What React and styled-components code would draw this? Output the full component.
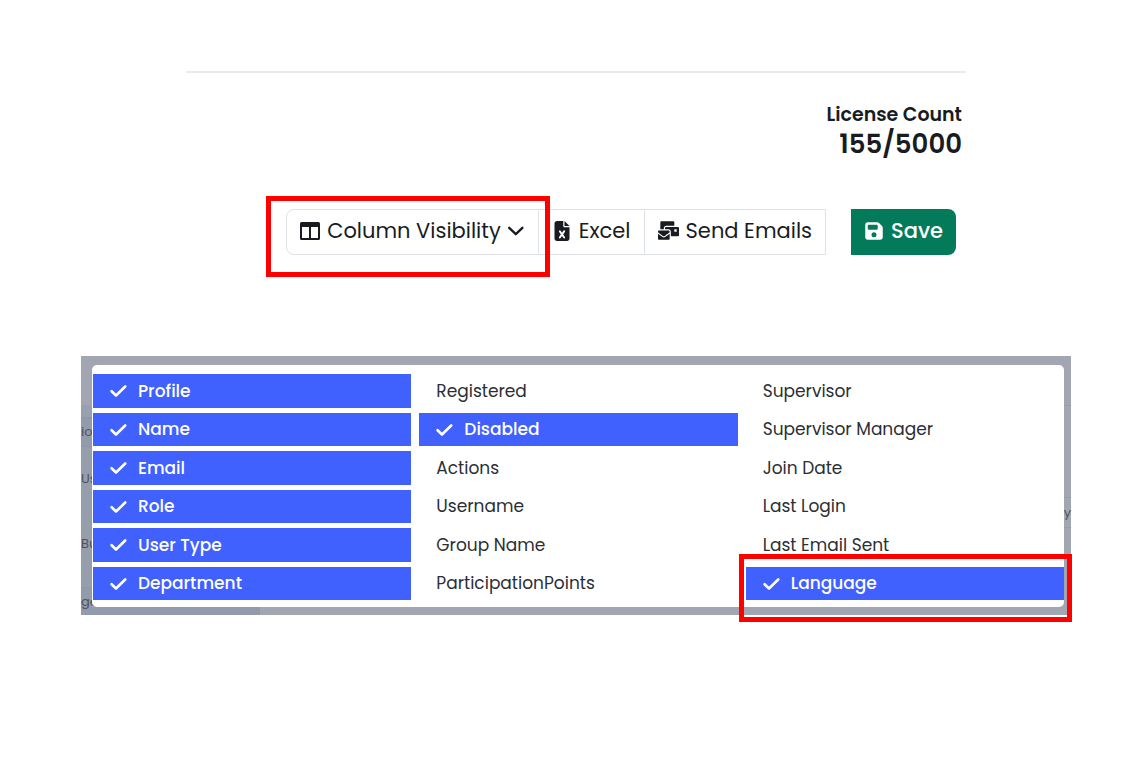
import React, { useState } from 'react';
import styled, { createGlobalStyle, css } from 'styled-components';
import { FaMailBulk } from 'react-icons/fa';
import { FaFileExcel, FaFloppyDisk } from 'react-icons/fa6';

const GlobalStyle = createGlobalStyle`
	* {
		box-sizing: border-box;
	}
	body {
		margin: 0;
		background: #ffffff;
		color: #181c21;
		font-family: Poppins, Inter, 'Liberation Sans', sans-serif;
	}
	button {
		font-family: inherit;
		cursor: pointer;
	}
`;

const Page = styled.main`
	padding: 71px 60px 40px 81px;
`;

const Summary = styled.header`
	margin: 0 105px;
	padding: 30px 4px 0;
	border-top: 2px solid #e9ecef;
	text-align: right;
`;

const CountLabel = styled.div`
	font-size: 19px;
	font-weight: 600;
	line-height: 24px;
`;

const CountValue = styled.div`
	font-size: 26px;
	font-weight: 600;
	line-height: 34px;
`;

const Toolbar = styled.div`
	display: flex;
	justify-content: flex-end;
	gap: 25px;
	margin: 48px 115px 0 0;
`;

const Group = styled.div`
	display: flex;
	border: 1px solid #dee2e6;
	border-radius: 8px 0 0 8px;
`;

const ToolButton = styled.button`
	display: flex;
	align-items: center;
	gap: 7px;
	height: 44px;
	padding: 0 13px 3px;
	border: 0;
	background: transparent;
	color: #181c21;
	font-size: 21px;
	white-space: nowrap;
	svg {
		flex: none;
		width: auto;
	}
`;

const GroupButton = styled(ToolButton)`
	border-left: 1px solid #dee2e6;
`;

const SaveButton = styled(ToolButton)`
	height: 46px;
	border-radius: 0 8px 8px 0;
	background: #037b5b;
	color: #ffffff;
	font-weight: 500;
`;

const Marked = styled.div`
	position: relative;
	display: flex;
	&:after {
		content: '';
		position: absolute;
		inset: ${(p) => p.$inset};
		border: 5px solid #ff0000;
		pointer-events: none;
		z-index: 1;
	}
`;

const Backdrop = styled.section`
	display: grid;
	grid-template-columns: 11px 1fr 7px;
	margin-top: 101px;
	background: #a1a6b2;
`;

const Edge = styled.div`
	display: flex;
	flex-direction: column;
	min-width: 0;
`;

const EdgeCell = styled.div`
	display: flex;
	align-items: center;
	justify-content: ${(p) => p.$align || 'flex-start'};
	height: ${(p) => p.$height}px;
	border-top: 1px solid ${(p) => p.$line || 'transparent'};
	background: ${(p) => p.$fill || 'transparent'};
	color: #4b5361;
	font-size: 13px;
	white-space: nowrap;
`;

const Middle = styled.div`
	position: relative;
	min-width: 0;
	padding-top: 9px;
`;

const Menu = styled.div`
	display: grid;
	grid-template-columns: repeat(3, 1fr);
	grid-template-rows: repeat(6, 1fr);
	grid-auto-flow: column;
	gap: 5px 8px;
	min-height: 242px;
	padding: 9px 0 7px 1px;
	border-radius: 5px;
	background: #ffffff;
`;

const Footer = styled.div`
	width: 168px;
	height: 8px;
	background: #929bab;
`;

const Option = styled.label`
	display: flex;
	align-items: center;
	flex: 1;
	gap: 11px;
	padding: 0 17px;
	color: #2b2f34;
	font-size: 17px;
	white-space: nowrap;
	cursor: pointer;
	${(p) =>
		p.$checked &&
		css`
			background: #4161ff;
			color: #ffffff;
			font-weight: 500;
		`}
	input {
		position: absolute;
		opacity: 0;
		pointer-events: none;
	}
`;

const Check = () => (
	<svg width='17' height='13' viewBox='0 0 17 13' fill='none' stroke='currentColor' strokeWidth='2.6' strokeLinecap='round' strokeLinejoin='round'>
		<path d='M1.6 7.2L6 11.5L15.2 2.5' />
	</svg>
);

const Chevron = () => (
	<svg width='17' height='10' viewBox='0 0 17 10' fill='none' stroke='currentColor' strokeWidth='2.3' strokeLinecap='round' strokeLinejoin='round'>
		<path d='M1.2 1.8L7.8 8.2L14.4 1.8' />
	</svg>
);

const ColumnsIcon = () => (
	<svg width='20' height='18' viewBox='0 0 20 18' fill='currentColor'>
		<path fillRule='evenodd' d='M1.5 0H18.5Q20 0 20 1.5V16.5Q20 18 18.5 18H1.5Q0 18 0 16.5V1.5Q0 0 1.5 0ZM2 5V16H9V5ZM11 5V16H18V5Z' />
	</svg>
);

const columns = [
	'Profile',
	'Name',
	'Email',
	'Role',
	'User Type',
	'Department',
	'Registered',
	'Disabled',
	'Actions',
	'Username',
	'Group Name',
	'ParticipationPoints',
	'Supervisor',
	'Supervisor Manager',
	'Join Date',
	'Last Login',
	'Last Email Sent',
	'Language',
];

const shown = ['Profile', 'Name', 'Email', 'Role', 'User Type', 'Department', 'Disabled', 'Language'];

export default () => {
	const [visible, setVisible] = useState(shown);

	const toggle = (name) =>
		setVisible(visible.includes(name) ? visible.filter((v) => v !== name) : [...visible, name]);

	const renderOption = (name) => {
		const checked = visible.includes(name);
		return (
			<Option key={name} $checked={checked}>
				<input type='checkbox' checked={checked} onChange={() => toggle(name)} />
				{checked && <Check />}
				{name}
			</Option>
		);
	};

	return (
		<>
			<GlobalStyle />
			<Page>
				<Summary>
					<CountLabel>License Count</CountLabel>
					<CountValue>155/5000</CountValue>
				</Summary>
				<Toolbar>
					<Group>
						<Marked $inset='-14px -12px -23px -21px'>
							<ToolButton>
								<ColumnsIcon />
								Column Visibility
								<Chevron />
							</ToolButton>
						</Marked>
						<GroupButton>
							<FaFileExcel size={20} />
							Excel
						</GroupButton>
						<GroupButton>
							<FaMailBulk size={21} />
							Send Emails
						</GroupButton>
					</Group>
					<SaveButton>
						<FaFloppyDisk size={20} />
						Save
					</SaveButton>
				</Toolbar>
				<Backdrop>
					<Edge>
						<EdgeCell $height={49} />
						<EdgeCell $height={12} $fill='#99a1ae' />
						<EdgeCell $height={29} $line='#8e97a5' $fill='#929bab'>io</EdgeCell>
						<EdgeCell $height={64} $line='#8e97a5' $fill='#979eab'>Us</EdgeCell>
						<EdgeCell $height={66} $fill='#979eab'>Bu</EdgeCell>
						<EdgeCell $height={11} $fill='#979eab' />
						<EdgeCell $height={28} $line='#8e97a5' $fill='#929bab'>ge</EdgeCell>
					</Edge>
					<Middle>
						<Menu>
							{columns.map((name) =>
								name === 'Language' ? (
									<Marked key={name} $inset='-13px -8px -22px -7px'>
										{renderOption(name)}
									</Marked>
								) : (
									renderOption(name)
								)
							)}
						</Menu>
						<Footer />
					</Middle>
					<Edge>
						<EdgeCell $height={49} />
						<EdgeCell $height={92} $line='#969ca8' />
						<EdgeCell $height={30} $line='#969ca8' $align='flex-end'>y</EdgeCell>
						<EdgeCell $height={88} $line='#969ca8' />
					</Edge>
				</Backdrop>
			</Page>
		</>
	);
};
